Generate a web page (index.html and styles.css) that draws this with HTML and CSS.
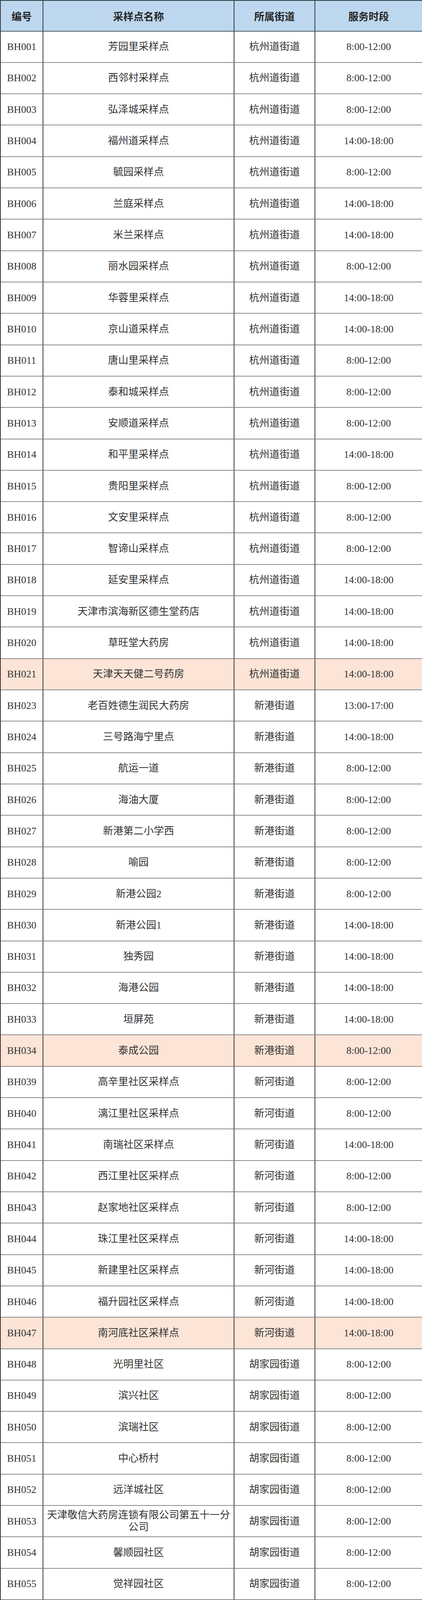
FILE: index.html
```html
<!DOCTYPE html>
<html lang="zh-CN">
<head>
<meta charset="utf-8">
<title>采样点</title>
<link rel="stylesheet" href="styles.css">
</head>
<body>
<div class="sites">
<div class="row head"><div class="cell">编号</div><div class="cell">采样点名称</div><div class="cell">所属街道</div><div class="cell">服务时段</div></div>
<div class="row"><div class="cell">BH001</div><div class="cell">芳园里采样点</div><div class="cell">杭州道街道</div><div class="cell">8:00-12:00</div></div>
<div class="row"><div class="cell">BH002</div><div class="cell">西邻村采样点</div><div class="cell">杭州道街道</div><div class="cell">8:00-12:00</div></div>
<div class="row"><div class="cell">BH003</div><div class="cell">弘泽城采样点</div><div class="cell">杭州道街道</div><div class="cell">8:00-12:00</div></div>
<div class="row"><div class="cell">BH004</div><div class="cell">福州道采样点</div><div class="cell">杭州道街道</div><div class="cell">14:00-18:00</div></div>
<div class="row"><div class="cell">BH005</div><div class="cell">毓园采样点</div><div class="cell">杭州道街道</div><div class="cell">8:00-12:00</div></div>
<div class="row"><div class="cell">BH006</div><div class="cell">兰庭采样点</div><div class="cell">杭州道街道</div><div class="cell">14:00-18:00</div></div>
<div class="row"><div class="cell">BH007</div><div class="cell">米兰采样点</div><div class="cell">杭州道街道</div><div class="cell">14:00-18:00</div></div>
<div class="row"><div class="cell">BH008</div><div class="cell">丽水园采样点</div><div class="cell">杭州道街道</div><div class="cell">8:00-12:00</div></div>
<div class="row"><div class="cell">BH009</div><div class="cell">华蓉里采样点</div><div class="cell">杭州道街道</div><div class="cell">14:00-18:00</div></div>
<div class="row"><div class="cell">BH010</div><div class="cell">京山道采样点</div><div class="cell">杭州道街道</div><div class="cell">14:00-18:00</div></div>
<div class="row"><div class="cell">BH011</div><div class="cell">唐山里采样点</div><div class="cell">杭州道街道</div><div class="cell">8:00-12:00</div></div>
<div class="row"><div class="cell">BH012</div><div class="cell">泰和城采样点</div><div class="cell">杭州道街道</div><div class="cell">8:00-12:00</div></div>
<div class="row"><div class="cell">BH013</div><div class="cell">安顺道采样点</div><div class="cell">杭州道街道</div><div class="cell">8:00-12:00</div></div>
<div class="row"><div class="cell">BH014</div><div class="cell">和平里采样点</div><div class="cell">杭州道街道</div><div class="cell">14:00-18:00</div></div>
<div class="row"><div class="cell">BH015</div><div class="cell">贵阳里采样点</div><div class="cell">杭州道街道</div><div class="cell">8:00-12:00</div></div>
<div class="row"><div class="cell">BH016</div><div class="cell">文安里采样点</div><div class="cell">杭州道街道</div><div class="cell">8:00-12:00</div></div>
<div class="row"><div class="cell">BH017</div><div class="cell">智谛山采样点</div><div class="cell">杭州道街道</div><div class="cell">8:00-12:00</div></div>
<div class="row"><div class="cell">BH018</div><div class="cell">延安里采样点</div><div class="cell">杭州道街道</div><div class="cell">14:00-18:00</div></div>
<div class="row"><div class="cell">BH019</div><div class="cell">天津市滨海新区德生堂药店</div><div class="cell">杭州道街道</div><div class="cell">14:00-18:00</div></div>
<div class="row"><div class="cell">BH020</div><div class="cell">草旺堂大药房</div><div class="cell">杭州道街道</div><div class="cell">14:00-18:00</div></div>
<div class="row mark"><div class="cell">BH021</div><div class="cell">天津天天健二号药房</div><div class="cell">杭州道街道</div><div class="cell">14:00-18:00</div></div>
<div class="row"><div class="cell">BH023</div><div class="cell">老百姓德生润民大药房</div><div class="cell">新港街道</div><div class="cell">13:00-17:00</div></div>
<div class="row"><div class="cell">BH024</div><div class="cell">三号路海宁里点</div><div class="cell">新港街道</div><div class="cell">14:00-18:00</div></div>
<div class="row"><div class="cell">BH025</div><div class="cell">航运一道</div><div class="cell">新港街道</div><div class="cell">8:00-12:00</div></div>
<div class="row"><div class="cell">BH026</div><div class="cell">海油大厦</div><div class="cell">新港街道</div><div class="cell">8:00-12:00</div></div>
<div class="row"><div class="cell">BH027</div><div class="cell">新港第二小学西</div><div class="cell">新港街道</div><div class="cell">8:00-12:00</div></div>
<div class="row"><div class="cell">BH028</div><div class="cell">喻园</div><div class="cell">新港街道</div><div class="cell">8:00-12:00</div></div>
<div class="row"><div class="cell">BH029</div><div class="cell">新港公园2</div><div class="cell">新港街道</div><div class="cell">8:00-12:00</div></div>
<div class="row"><div class="cell">BH030</div><div class="cell">新港公园1</div><div class="cell">新港街道</div><div class="cell">14:00-18:00</div></div>
<div class="row"><div class="cell">BH031</div><div class="cell">独秀园</div><div class="cell">新港街道</div><div class="cell">14:00-18:00</div></div>
<div class="row"><div class="cell">BH032</div><div class="cell">海港公园</div><div class="cell">新港街道</div><div class="cell">14:00-18:00</div></div>
<div class="row"><div class="cell">BH033</div><div class="cell">垣屏苑</div><div class="cell">新港街道</div><div class="cell">14:00-18:00</div></div>
<div class="row mark"><div class="cell">BH034</div><div class="cell">泰成公园</div><div class="cell">新港街道</div><div class="cell">8:00-12:00</div></div>
<div class="row"><div class="cell">BH039</div><div class="cell">高辛里社区采样点</div><div class="cell">新河街道</div><div class="cell">8:00-12:00</div></div>
<div class="row"><div class="cell">BH040</div><div class="cell">漓江里社区采样点</div><div class="cell">新河街道</div><div class="cell">8:00-12:00</div></div>
<div class="row"><div class="cell">BH041</div><div class="cell">南瑞社区采样点</div><div class="cell">新河街道</div><div class="cell">14:00-18:00</div></div>
<div class="row"><div class="cell">BH042</div><div class="cell">西江里社区采样点</div><div class="cell">新河街道</div><div class="cell">8:00-12:00</div></div>
<div class="row"><div class="cell">BH043</div><div class="cell">赵家地社区采样点</div><div class="cell">新河街道</div><div class="cell">8:00-12:00</div></div>
<div class="row"><div class="cell">BH044</div><div class="cell">珠江里社区采样点</div><div class="cell">新河街道</div><div class="cell">14:00-18:00</div></div>
<div class="row"><div class="cell">BH045</div><div class="cell">新建里社区采样点</div><div class="cell">新河街道</div><div class="cell">14:00-18:00</div></div>
<div class="row"><div class="cell">BH046</div><div class="cell">福升园社区采样点</div><div class="cell">新河街道</div><div class="cell">14:00-18:00</div></div>
<div class="row mark"><div class="cell">BH047</div><div class="cell">南河底社区采样点</div><div class="cell">新河街道</div><div class="cell">14:00-18:00</div></div>
<div class="row"><div class="cell">BH048</div><div class="cell">光明里社区</div><div class="cell">胡家园街道</div><div class="cell">8:00-12:00</div></div>
<div class="row"><div class="cell">BH049</div><div class="cell">滨兴社区</div><div class="cell">胡家园街道</div><div class="cell">8:00-12:00</div></div>
<div class="row"><div class="cell">BH050</div><div class="cell">滨瑞社区</div><div class="cell">胡家园街道</div><div class="cell">8:00-12:00</div></div>
<div class="row"><div class="cell">BH051</div><div class="cell">中心桥村</div><div class="cell">胡家园街道</div><div class="cell">8:00-12:00</div></div>
<div class="row"><div class="cell">BH052</div><div class="cell">远洋城社区</div><div class="cell">胡家园街道</div><div class="cell">8:00-12:00</div></div>
<div class="row"><div class="cell">BH053</div><div class="cell">天津敬信大药房连锁有限公司第五十一分公司</div><div class="cell">胡家园街道</div><div class="cell">8:00-12:00</div></div>
<div class="row"><div class="cell">BH054</div><div class="cell">馨顺园社区</div><div class="cell">胡家园街道</div><div class="cell">8:00-12:00</div></div>
<div class="row"><div class="cell">BH055</div><div class="cell">觉祥园社区</div><div class="cell">胡家园街道</div><div class="cell">8:00-12:00</div></div>
</div>
</body>
</html>
```

FILE: styles.css
```css
html, body {
  margin: 0;
  padding: 0;
  background: #ffffff;
}

/* The table fills the window height: 1 header row + 50 data rows,
   in the proportions of the original sheet (85 : 84.76). */
.sites {
  width: 1080px;
  height: 100vh;
  display: grid;
  grid-template-columns: 109px 489px 207px 275px;
  grid-template-rows: 85fr repeat(50, 84.76fr);
  box-sizing: border-box;
  border-left: 2px solid #3a3a3a;
  font-family: "Liberation Serif", "Noto Sans CJK SC", serif;
  color: #333333;
}

.row {
  display: contents;
}

.cell {
  box-sizing: border-box;
  min-height: 0;
  display: flex;
  align-items: center;
  justify-content: center;
  text-align: center;
  padding: 0 8px;
  border-right: 2px solid #3a3a3a;
  border-bottom: 2px solid #8c8c8c;
  font-size: 26px;
  line-height: 31px;
  overflow: hidden;
  background: #ffffff;
}

.head .cell {
  background: #bdd7ee;
  font-family: "Noto Sans CJK SC", sans-serif;
  font-weight: 700;
  font-size: 26px;
  color: #262626;
  border-top: 2px solid #2e3a44;
  border-bottom: 2px solid #4a5866;
  border-right-color: #2e3a44;
}

.mark .cell {
  background: #fce4d6;
}
```
